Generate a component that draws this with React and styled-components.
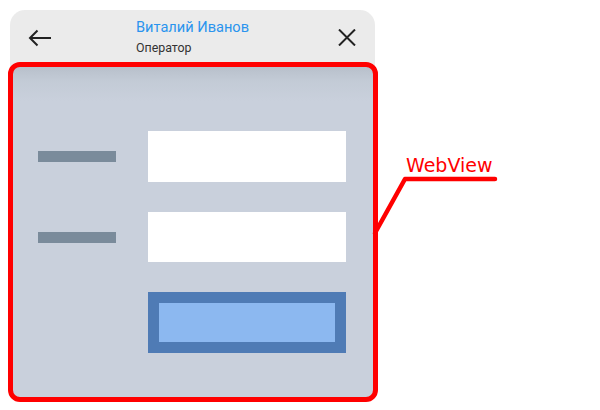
import React from 'react'
import styled, { createGlobalStyle } from 'styled-components'

const GlobalStyle = createGlobalStyle`
  body{
    margin:0;
    background:#fff;
    font-family: Roboto, "Liberation Sans", sans-serif;
  }
`

const Page = styled.div`
  position: relative;
  width: 600px;
  height: 410px;
  overflow: hidden;
  padding: 10px 0 0 10px;
  box-sizing: border-box;
`

const Phone = styled.div`
  width: 365px;
  display: flex;
  flex-direction: column;
  border-radius: 15px 15px 0 0;
  background: linear-gradient(#ebebeb, #ebebeb) top / 100% 70px no-repeat;
`

const Header = styled.div`
  height: 52px;
  display: flex;
  align-items: flex-start;
  padding: 0 19px 0 18px;
  box-sizing: border-box;
`

const IconBtn = styled.div`
  display: flex;
  align-self: center;
  margin-top: ${p => p.$offset || 0}px;
  color: #222;
`

const TitleBlock = styled.div`
  flex: 1;
  padding: 8px 0 0 84px;
  display: flex;
  flex-direction: column;
  gap: 4px;
`

const Name = styled.div`
  font-size: 14.6px;
  line-height: 18px;
  color: #2a94ee;
`

const Role = styled.div`
  font-size: 12.4px;
  line-height: 16px;
  color: #333;
`

const WebView = styled.div`
  margin: 0 -2.5px;
  height: 340px;
  box-sizing: border-box;
  border: 5px solid #ff0000;
  border-radius: 12px;
  background: linear-gradient(to bottom, #b8c0cb 0, #c3cbd6 14px, #c9d0dc 34px);
  display: grid;
  grid-template-columns: 78px 198px;
  grid-template-rows: 51px 50px 61px;
  column-gap: 32px;
  row-gap: 30px;
  padding: 64px 0 0 25.5px;
  align-content: start;
`

const LabelBar = styled.div`
  height: 11px;
  align-self: center;
  background: #7a8b9b;
`

const Field = styled.div`
  background: #fff;
`

const Submit = styled.div`
  grid-column: 2;
  box-sizing: border-box;
  border: 11px solid #4f7bb5;
  background: #8cb8f0;
`

const Callout = styled.svg`
  position: absolute;
  left: 0;
  top: 0;
  pointer-events: none;
`

const CalloutLabel = styled.div`
  position: absolute;
  left: 406px;
  top: 156px;
  font-family: "DejaVu Sans", Verdana, sans-serif;
  font-size: 19px;
  line-height: 1;
  color: #ff0000;
`

const BackIcon = () => (
  <svg width="24" height="18" viewBox="0 0 24 18" fill="none" stroke="currentColor" strokeWidth="2">
    <path d="M2 9 H23" />
    <path d="M9.5 1.5 L2 9 L9.5 16.5" />
  </svg>
)

const CloseIcon = () => (
  <svg width="18" height="17" viewBox="0 0 18 17" fill="none" stroke="currentColor" strokeWidth="2">
    <path d="M1 0.5 L17 16.5 M17 0.5 L1 16.5" />
  </svg>
)

const App = () => {
  return (
    <Page>
      <GlobalStyle />
      <Phone>
        <Header>
          <IconBtn $offset={4}><BackIcon /></IconBtn>
          <TitleBlock>
            <Name>Виталий Иванов</Name>
            <Role>Оператор</Role>
          </TitleBlock>
          <IconBtn $offset={2}><CloseIcon /></IconBtn>
        </Header>
        <WebView>
          <LabelBar />
          <Field />
          <LabelBar />
          <Field />
          <Submit />
        </WebView>
      </Phone>
      <Callout width="600" height="410">
        <polyline points="375,233 405,179 495,179" fill="none" stroke="#ff0000"
          strokeWidth="4.5" strokeLinecap="round" strokeLinejoin="round" />
      </Callout>
      <CalloutLabel>WebView</CalloutLabel>
    </Page>
  )
}

export default App
